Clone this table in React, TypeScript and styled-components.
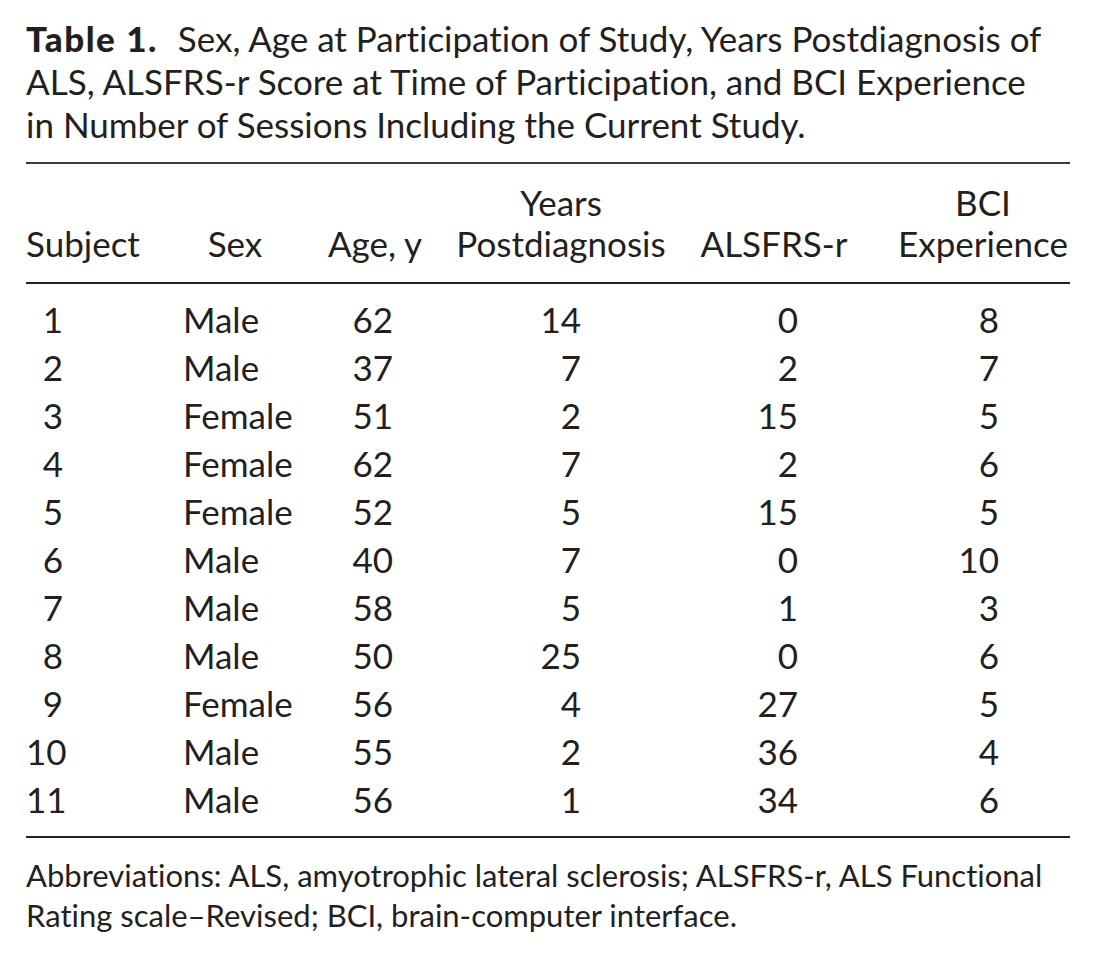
import React from 'react'
import styled, { createGlobalStyle } from 'styled-components'

const GlobalStyle = createGlobalStyle`
    html, body {
        margin: 0;
        padding: 0;
        background: #ffffff;
    }
    body {
        font-family: Lato, "Open Sans", "Liberation Sans", sans-serif;
        font-variant-ligatures: none;
        color: #231f20;
    }
`

const Page = styled.div`
    width: 1044px;
    padding: 17px 0 0 26px;
`

const Caption = styled.p`
    margin: 0;
    font-size: 35px;
    line-height: 43px;
    white-space: nowrap;

    b {
        font-weight: 900;
        letter-spacing: 1.5px;
        margin-right: 20px;
    }
`

const Rule = styled.div<{ $weight?: number; $tone?: string }>`
    height: ${p => p.$weight ?? 2}px;
    background: ${p => p.$tone ?? '#231f20'};
`

const Section = styled.div<{ $top: number; $bottom: number }>`
    padding: ${p => p.$top}px 0 ${p => p.$bottom}px;
`

const COLS = '134px 150px 130px 242px 192px 196px'

const Row = styled.div<{ $lh: number }>`
    display: grid;
    grid-template-columns: ${COLS};
    font-size: 35px;
    line-height: ${p => p.$lh}px;
    white-space: nowrap;
`

const Cell = styled.div<{ $align?: 'left' | 'center' | 'right'; $pl?: number; $pr?: number }>`
    text-align: ${p => p.$align ?? 'left'};
    padding-left: ${p => p.$pl ?? 0}px;
    padding-right: ${p => p.$pr ?? 0}px;
`

const HeadCell = styled(Cell)`
    display: flex;
    flex-direction: column;
    justify-content: flex-end;
    align-items: ${p => (p.$align === 'left' ? 'flex-start' : 'center')};
`

const Footnote = styled.p`
    margin: 0;
    font-size: 31px;
    line-height: 40px;
    white-space: nowrap;
`

type Subject = {
    id: number
    sex: string
    age: number
    years: number
    alsfrs: number
    bci: number
}

const subjects: Subject[] = [
    { id: 1, sex: 'Male', age: 62, years: 14, alsfrs: 0, bci: 8 },
    { id: 2, sex: 'Male', age: 37, years: 7, alsfrs: 2, bci: 7 },
    { id: 3, sex: 'Female', age: 51, years: 2, alsfrs: 15, bci: 5 },
    { id: 4, sex: 'Female', age: 62, years: 7, alsfrs: 2, bci: 6 },
    { id: 5, sex: 'Female', age: 52, years: 5, alsfrs: 15, bci: 5 },
    { id: 6, sex: 'Male', age: 40, years: 7, alsfrs: 0, bci: 10 },
    { id: 7, sex: 'Male', age: 58, years: 5, alsfrs: 1, bci: 3 },
    { id: 8, sex: 'Male', age: 50, years: 25, alsfrs: 0, bci: 6 },
    { id: 9, sex: 'Female', age: 56, years: 4, alsfrs: 27, bci: 5 },
    { id: 10, sex: 'Male', age: 55, years: 2, alsfrs: 36, bci: 4 },
    { id: 11, sex: 'Male', age: 56, years: 1, alsfrs: 34, bci: 6 },
]

export default function App() {
    return (
        <Page>
            <GlobalStyle />
            <Caption>
                <b>Table 1.</b>Sex, Age at Participation of Study, Years Postdiagnosis of
                <br />
                ALS, ALSFRS-r Score at Time of Participation, and BCI Experience
                <br />
                in Number of Sessions Including the Current Study.
            </Caption>

            <Section $top={16} $bottom={0}>
                <Rule $tone="#3a3a3a" />
            </Section>

            <Section $top={18} $bottom={18}>
                <Row $lh={41}>
                    <HeadCell $align="left">Subject</HeadCell>
                    <HeadCell $align="center">Sex</HeadCell>
                    <HeadCell $align="center">Age, y</HeadCell>
                    <HeadCell $align="center">
                        <span>Years</span>
                        <span>Postdiagnosis</span>
                    </HeadCell>
                    <HeadCell $align="center" $pr={8}>ALSFRS-r</HeadCell>
                    <HeadCell $align="center" $pl={22}>
                        <span>BCI</span>
                        <span>Experience</span>
                    </HeadCell>
                </Row>
            </Section>

            <Rule />

            <Section $top={11} $bottom={13}>
                {subjects.map(s => (
                    <Row $lh={48} key={s.id}>
                        <Cell $align="right" $pr={97}>{s.id}</Cell>
                        <Cell $pl={23}>{s.sex}</Cell>
                        <Cell $align="right" $pr={47}>{s.age}</Cell>
                        <Cell $align="right" $pr={101}>{s.years}</Cell>
                        <Cell $align="right" $pr={76}>{s.alsfrs}</Cell>
                        <Cell $align="right" $pr={71}>{s.bci}</Cell>
                    </Row>
                ))}
            </Section>

            <Rule />

            <Section $top={17} $bottom={0}>
                <Footnote>
                    Abbreviations: ALS, amyotrophic lateral sclerosis; ALSFRS-r, ALS Functional
                    <br />
                    Rating scale–Revised; BCI, brain-computer interface.
                </Footnote>
            </Section>
        </Page>
    )
}
